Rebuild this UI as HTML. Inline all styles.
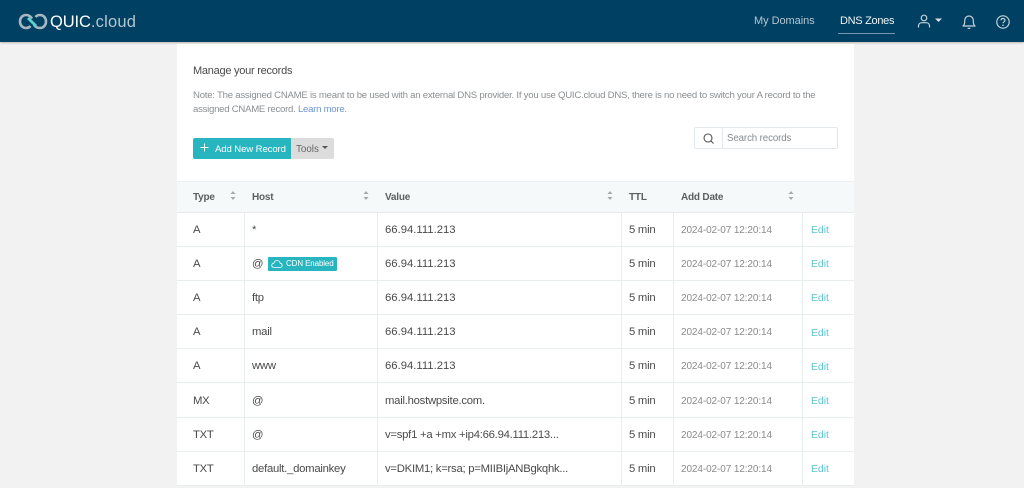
<!DOCTYPE html>
<html><head><meta charset="utf-8"><style>
html,body{margin:0;padding:0;width:1024px;height:488px;overflow:hidden;background:#f2f2f2;font-family:"Liberation Sans",sans-serif;color:#4a4a4a}
.a{position:absolute;white-space:nowrap}
#hd{position:absolute;left:0;top:0;width:1024px;height:42px;background:#004063;box-shadow:0 1px 2px rgba(0,0,0,.25)}
#card{position:absolute;left:177px;top:44px;width:677px;height:441px;background:#fff}
#th{position:absolute;left:177px;top:181px;width:677px;height:30px;background:#f6f9f9;border-top:1px solid #edf1f1;border-bottom:1px solid #e6ebeb}
.h{position:absolute;height:1px;left:177px;width:677px;background:#e8eded}
.v{position:absolute;width:1px;top:212px;height:273px;background:#e8eded}
.c{position:absolute;white-space:nowrap;font-size:11.3px;line-height:16px;color:#4a4a4a;letter-spacing:-.25px}
.n{letter-spacing:0}
.d{color:#8a8a8a;font-size:10px;letter-spacing:-.1px;margin-top:1px}
.e{color:#5cc6cf;font-size:10.4px;letter-spacing:0;margin-top:1px}
.t{position:absolute;white-space:nowrap;font-size:10px;font-weight:bold;line-height:14px;color:#5a5f62;top:191px;letter-spacing:-.2px}
.s{position:absolute;top:191px;width:6px;height:9px}
</style></head><body>
<div id="hd"></div>
<svg class="a" style="left:18px;top:13px" width="30" height="17" viewBox="0 0 30 17" fill="none"><path d="M14 5.500C12.500 3.200 10.500 2 8 2 4.500 2 2 4.800 2 8.500S4.500 15 8 15c2 0 3.500-.8 4.500-2" stroke="#a9b8c0" stroke-width="2.600"/><path d="M16 12c1.500 2 3.500 3 6 3 3.500 0 6-2.800 6-6.500S25.500 2 22 2c-2 0-3.500.8-4.500 2" stroke="#a9b8c0" stroke-width="2.600"/><path d="M10 5l8 8" stroke="#5fd0cf" stroke-width="2.800"/></svg>
<div class="a" style="left:50px;top:12px;font-size:16.500px;line-height:20px;color:#fff;letter-spacing:-.1px">QUIC<span style="color:#b5c6cf;letter-spacing:.2px">.cloud</span></div>
<div class="a" style="left:754px;top:13px;font-size:11px;line-height:16px;color:#b4c6d0;letter-spacing:-.05px">My Domains</div>
<div class="a" style="left:840px;top:13px;font-size:11px;line-height:16px;color:#eef3f5;letter-spacing:-.3px">DNS Zones</div>
<div class="a" style="left:838px;top:33px;width:57px;height:1px;background:#6f98ad"></div>
<svg class="a" style="left:916px;top:14px" width="30" height="15" viewBox="0 0 30 15" fill="none"><circle cx="8" cy="4" r="2.800" stroke="#c4d2da" stroke-width="1.200"/><path d="M2.500 13.500v-1.500c0-2 1.500-3.300 3.500-3.300h4c2 0 3.500 1.300 3.500 3.300v1.500" stroke="#c4d2da" stroke-width="1.200"/><path d="M19 4.500h7l-3.500 3.500z" fill="#d5e0e6"/></svg>
<svg class="a" style="left:961px;top:14px" width="16" height="16" viewBox="0 0 16 16" fill="none"><path d="M2 12h12c-1.300-1-1.700-2.500-1.700-4.500V6.500C12.300 4 10.500 2 8 2S3.700 4 3.700 6.500v1c0 2-.4 3.500-1.700 4.500z" stroke="#c4d2da" stroke-width="1.200" stroke-linejoin="round"/><path d="M6.800 13.800c.5 1 1.900 1 2.400 0" stroke="#c4d2da" stroke-width="1.200"/></svg>
<svg class="a" style="left:995px;top:14px" width="16" height="16" viewBox="0 0 16 16" fill="none"><circle cx="8" cy="8" r="6.200" stroke="#c4d2da" stroke-width="1.200"/><path d="M6 6.300C6 5 7 4.500 8 4.500s2 .7 2 1.800c0 1.500-2 1.500-2 3" stroke="#c4d2da" stroke-width="1.200"/><circle cx="8" cy="11.300" r=".8" fill="#c4d2da"/></svg>

<div id="card"></div>
<div class="a" style="left:193px;top:63px;font-size:11px;line-height:16px;color:#4a4a4a;letter-spacing:-.25px">Manage your records</div>
<div class="a" style="left:193px;top:89px;font-size:9.600px;line-height:14px;color:#8b8f92;letter-spacing:-.24px">Note: The assigned CNAME is meant to be used with an external DNS provider. If you use QUIC.cloud DNS, there is no need to switch your A record to the</div>
<div class="a" style="left:193px;top:103px;font-size:9.600px;line-height:14px;color:#8b8f92;letter-spacing:-.26px">assigned CNAME record. <span style="color:#6f94d8">Learn more.</span></div>

<div class="a" style="left:193px;top:138px;width:98px;height:21px;background:#27b6bf;border-radius:2px 0 0 2px"></div>
<svg class="a" style="left:200px;top:143px" width="9" height="9" viewBox="0 0 9 9"><path d="M4.500 .5v8M.5 4.500h8" stroke="#fff" stroke-width="1"/></svg>
<div class="a" style="left:215px;top:143px;font-size:9.600px;line-height:14px;color:#fff;letter-spacing:-.12px">Add New Record</div>
<div class="a" style="left:291px;top:138px;width:43px;height:21px;background:#dcdcdc;border-radius:0 2px 2px 0"></div>
<div class="a" style="left:296px;top:143px;font-size:9.800px;line-height:14px;color:#666">Tools</div>
<div class="a" style="left:322px;top:146px;width:0;height:0;border:3px solid transparent;border-top:3px solid #555;border-bottom:0"></div>

<div class="a" style="left:694px;top:127px;width:142px;height:20px;border:1px solid #e3e8ec;border-radius:2px;background:#fff"></div>
<div class="a" style="left:722px;top:128px;width:1px;height:20px;background:#e3e8ec"></div>
<svg class="a" style="left:702px;top:132px" width="13" height="13" viewBox="0 0 13 13" fill="none"><circle cx="6" cy="6" r="4" stroke="#555" stroke-width="1.100"/><path d="M9 9l2.500 2.500" stroke="#555" stroke-width="1.100"/></svg>
<div class="a" style="left:727px;top:132px;font-size:9.700px;line-height:14px;color:#868b90;letter-spacing:-.1px">Search records</div>

<div id="th"></div>
<div class="t" style="left:193px">Type</div>
<div class="t" style="left:252px">Host</div>
<div class="t" style="left:385px">Value</div>
<div class="t" style="left:629px">TTL</div>
<div class="t" style="left:681px">Add Date</div>
<svg class="s" style="left:230px" viewBox="0 0 6 9"><path d="M3 0l2.500 3h-5zM3 9L.5 6h5z" fill="#a5aaad"/></svg>
<svg class="s" style="left:363px" viewBox="0 0 6 9"><path d="M3 0l2.500 3h-5zM3 9L.5 6h5z" fill="#a5aaad"/></svg>
<svg class="s" style="left:607px" viewBox="0 0 6 9"><path d="M3 0l2.500 3h-5zM3 9L.5 6h5z" fill="#a5aaad"/></svg>
<svg class="s" style="left:788px" viewBox="0 0 6 9"><path d="M3 0l2.500 3h-5zM3 9L.5 6h5z" fill="#a5aaad"/></svg>

<div class="h" style="top:246px"></div><div class="h" style="top:280px"></div><div class="h" style="top:314px"></div><div class="h" style="top:348px"></div><div class="h" style="top:382px"></div><div class="h" style="top:417px"></div><div class="h" style="top:451px"></div><div class="h" style="top:485px"></div>
<div class="v" style="left:244px"></div><div class="v" style="left:377px"></div><div class="v" style="left:621px"></div><div class="v" style="left:673px"></div><div class="v" style="left:802px"></div>

<div class="c" style="left:193px;top:222px">A</div><div class="c" style="left:252px;top:222px">*</div><div class="c n" style="left:385px;top:222px">66.94.111.213</div><div class="c" style="left:629px;top:222px">5 min</div><div class="c d" style="left:681px;top:222px">2024-02-07 12:20:14</div><div class="c e" style="left:811px;top:222px">Edit</div>

<div class="c" style="left:193px;top:256px">A</div><div class="c" style="left:252px;top:256px">@</div>
<div class="a" style="left:268px;top:257px;width:69px;height:14px;background:#27b6bf;border-radius:1px"></div>
<svg class="a" style="left:271px;top:259px" width="12" height="10" viewBox="0 0 12 10" fill="none"><path d="M3 8.500C1.500 8.500.8 7.500.8 6.300c0-1.200.9-2.100 2-2.100C3.300 2.500 4.600 1.500 6 1.500c1.700 0 3 1.200 3.200 2.800 1.100.1 2 1 2 2.100 0 1.200-.9 2.100-2.100 2.100z" stroke="#fff" stroke-width=".8"/></svg>
<div class="a" style="left:286px;top:257px;font-size:8px;line-height:14px;color:#fff;letter-spacing:-.12px">CDN Enabled</div>
<div class="c n" style="left:385px;top:256px">66.94.111.213</div><div class="c" style="left:629px;top:256px">5 min</div><div class="c d" style="left:681px;top:256px">2024-02-07 12:20:14</div><div class="c e" style="left:811px;top:256px">Edit</div>

<div class="c" style="left:193px;top:290px">A</div><div class="c" style="left:252px;top:290px">ftp</div><div class="c n" style="left:385px;top:290px">66.94.111.213</div><div class="c" style="left:629px;top:290px">5 min</div><div class="c d" style="left:681px;top:290px">2024-02-07 12:20:14</div><div class="c e" style="left:811px;top:290px">Edit</div>

<div class="c" style="left:193px;top:324px">A</div><div class="c" style="left:252px;top:324px">mail</div><div class="c n" style="left:385px;top:324px">66.94.111.213</div><div class="c" style="left:629px;top:324px">5 min</div><div class="c d" style="left:681px;top:324px">2024-02-07 12:20:14</div><div class="c e" style="left:811px;top:325px">Edit</div>

<div class="c" style="left:193px;top:358px">A</div><div class="c" style="left:252px;top:358px">www</div><div class="c n" style="left:385px;top:358px">66.94.111.213</div><div class="c" style="left:629px;top:358px">5 min</div><div class="c d" style="left:681px;top:358px">2024-02-07 12:20:14</div><div class="c e" style="left:811px;top:359px">Edit</div>

<div class="c" style="left:193px;top:393px">MX</div><div class="c" style="left:252px;top:393px">@</div><div class="c" style="left:385px;top:393px">mail.hostwpsite.com.</div><div class="c" style="left:629px;top:393px">5 min</div><div class="c d" style="left:681px;top:393px">2024-02-07 12:20:14</div><div class="c e" style="left:811px;top:393px">Edit</div>

<div class="c" style="left:193px;top:427px">TXT</div><div class="c" style="left:252px;top:427px">@</div><div class="c" style="left:385px;top:427px">v=spf1 +a +mx +ip4:66.94.111.213...</div><div class="c" style="left:629px;top:427px">5 min</div><div class="c d" style="left:681px;top:427px">2024-02-07 12:20:14</div><div class="c e" style="left:811px;top:427px">Edit</div>

<div class="c" style="left:193px;top:461px">TXT</div><div class="c" style="left:252px;top:461px">default._domainkey</div><div class="c" style="left:385px;top:461px">v=DKIM1; k=rsa; p=MIIBIjANBgkqhk...</div><div class="c" style="left:629px;top:461px">5 min</div><div class="c d" style="left:681px;top:461px">2024-02-07 12:20:14</div><div class="c e" style="left:811px;top:461px">Edit</div>
</body></html>
